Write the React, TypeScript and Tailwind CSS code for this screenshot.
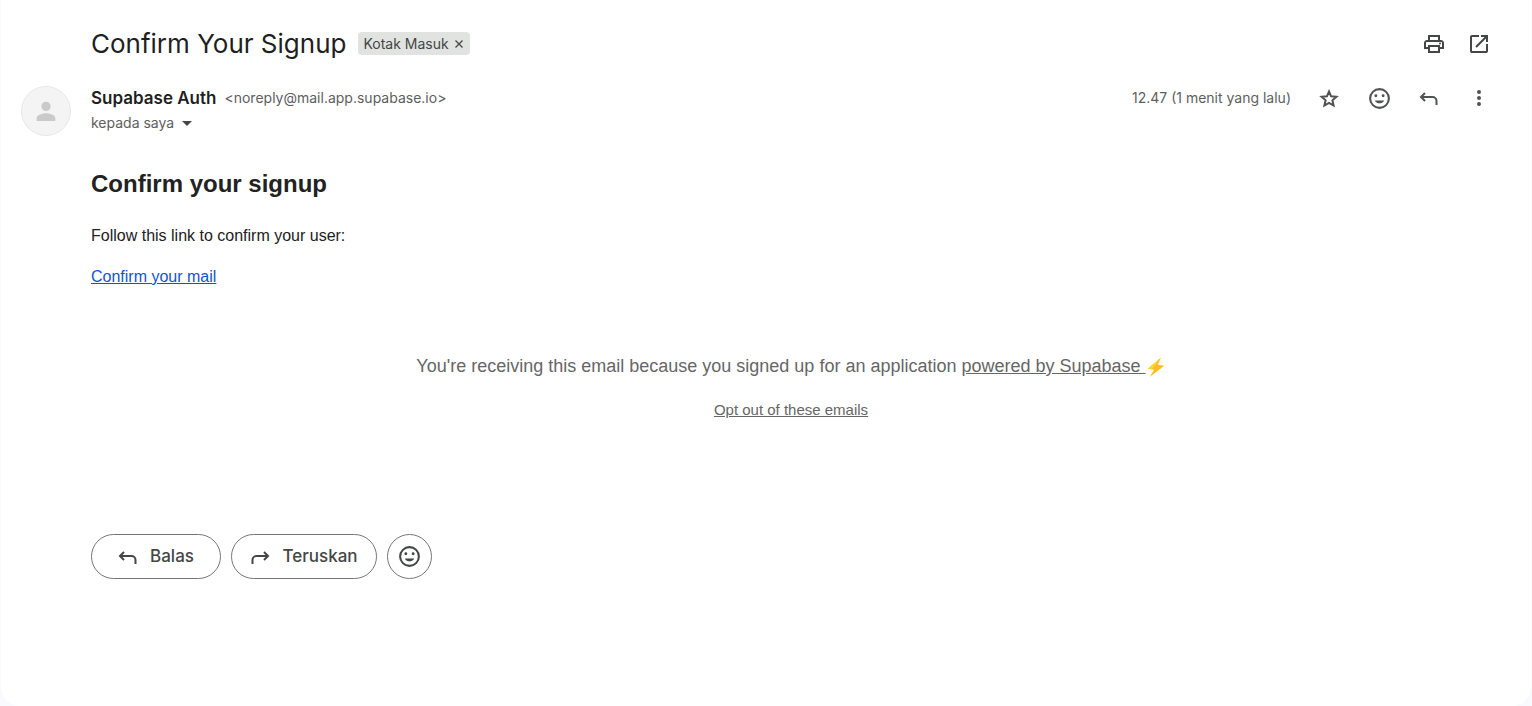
import type { ReactNode } from "react";

type IconProps = { className?: string; path: string };

function Icon({ className = "size-6", path }: IconProps) {
  return (
    <svg viewBox="0 0 24 24" className={className} fill="currentColor" aria-hidden="true">
      <path d={path} />
    </svg>
  );
}

const PRINT =
  "M19 8h-1V3H6v5H5c-1.66 0-3 1.34-3 3v6h4v4h12v-4h4v-6c0-1.66-1.34-3-3-3zM8 5h8v3H8V5zm8 14H8v-4h8v4zm2-4v-2H6v2H4v-4c0-.55.45-1 1-1h14c.55 0 1 .45 1 1v4h-2zM18 10.500a1 1 0 1 0 0 2 1 1 0 0 0 0-2z";
const OPEN =
  "M5 21c-.55 0-1.020-.2-1.410-.590A1.930 1.930 0 0 1 3 19V5c0-.55.2-1.020.590-1.410C3.980 3.200 4.450 3 5 3h7v2H5v14h14v-7h2v7c0 .55-.2 1.020-.590 1.410-.390.390-.860.590-1.410.590H5zm4.700-5.300-1.400-1.400L17.600 5H14V3h7v7h-2V6.400l-9.300 9.300z";
const STAR_OUTLINE = "M12 5.500l2.100 4.800 5.300.5-4 3.500 1.200 5.200L12 16.800l-4.600 2.700 1.200-5.200-4-3.500 5.300-.5z";
const SMILE =
  "M12 2a10 10 0 1 0 0 20 10 10 0 0 0 0-20zm0 18a8 8 0 1 1 0-16 8 8 0 0 1 0 16zM8.500 8a1.400 1.400 0 1 0 0 2.800 1.400 1.400 0 0 0 0-2.800zm7 0a1.400 1.400 0 1 0 0 2.800 1.400 1.400 0 0 0 0-2.800zM7.500 13.800c.7 1.700 2.400 2.800 4.500 2.800s3.800-1.100 4.500-2.800H7.500z";
const MORE =
  "M12 8a2 2 0 1 0 0-4 2 2 0 0 0 0 4zm0 2a2 2 0 1 0 0 4 2 2 0 0 0 0-4zm0 6a2 2 0 1 0 0 4 2 2 0 0 0 0-4z";
const PERSON =
  "M12 12a4 4 0 1 0 0-8 4 4 0 0 0 0 8zm0 2c-2.670 0-8 1.340-8 4v2.500h16V18c0-2.660-5.330-4-8-4z";

function Star() {
  return (
    <svg viewBox="0 0 24 24" className="size-6" fill="none" stroke="currentColor" strokeWidth="2" aria-hidden="true">
      <path d={STAR_OUTLINE} />
    </svg>
  );
}

function Arrow({ flip = false }: { flip?: boolean }) {
  return (
    <svg
      viewBox="0 0 20 20"
      className={flip ? "size-5 -scale-x-100" : "size-5"}
      fill="none"
      stroke="currentColor"
      strokeWidth="2"
      aria-hidden="true"
    >
      <path d="M6 5 2 9l4 4M2 9h11.500a4 4 0 0 1 4 4v4" />
    </svg>
  );
}

function IconButton({ label, children }: { label: string; children: ReactNode }) {
  return (
    <button type="button" aria-label={label} className="flex size-6 items-center justify-center">
      {children}
    </button>
  );
}

const pill =
  "flex h-[45px] items-center justify-center rounded-full border border-[#747775] text-[#444746]";

export default function App() {
  return (
    <div className="min-h-screen bg-[#f8fafd] px-px font-['Inter',sans-serif]">
      <main className="min-h-screen rounded-b-[20px] bg-white pr-10 pl-5 pb-8 text-[#202124]">
        <header className="flex items-center pt-6 pl-[70px]">
          <h1 className="text-[26px] leading-10 font-normal text-[#1f1f1f]">Confirm Your Signup</h1>
          <span className="mb-px ml-3 flex h-[23px] items-center gap-1 rounded bg-[#e1e3e1] px-[5px] text-sm text-[#444746]">
            Kotak Masuk
            <button type="button" aria-label="Hapus label Kotak Masuk" className="flex size-3 items-center justify-center">
              <svg viewBox="0 0 10 10" className="size-[10px]" fill="none" stroke="currentColor" strokeWidth="1.300" aria-hidden="true">
                <path d="M1.500 1.500l7 7M8.500 1.500l-7 7" />
              </svg>
            </button>
          </span>
          <div className="ml-auto flex gap-[21px] text-[#444746]">
            <IconButton label="Cetak semua"><Icon path={PRINT} /></IconButton>
            <IconButton label="Buka di jendela baru"><Icon path={OPEN} /></IconButton>
          </div>
        </header>

        <section className="mt-[22px] flex items-start">
          <div className="flex size-[50px] shrink-0 items-center justify-center rounded-full border border-[#e8e8e8] bg-[#f4f4f4] text-[#cacaca]">
            <Icon className="size-7" path={PERSON} />
          </div>
          <div className="ml-5 text-sm text-[#5e5e5e]">
            <div className="flex items-center gap-2 leading-6">
              <span className="text-[17px] font-semibold text-[#1f1f1f]">Supabase Auth</span>
              <span>&lt;noreply@mail.app.supabase.io&gt;</span>
            </div>
            <button type="button" className="mt-px flex items-center gap-2 leading-6">
              kepada saya
              <svg viewBox="0 0 10 5" className="h-[5px] w-[10px]" fill="#444746" aria-hidden="true">
                <path d="M0 0h10L5 5z" />
              </svg>
            </button>
          </div>
          <div className="ml-auto flex items-center text-[#5e5e5e]">
            <time className="mr-[26px] text-sm">12.47 (1 menit yang lalu)</time>
            <div className="flex gap-[26px] text-[#505352]">
              <IconButton label="Beri bintang"><Star /></IconButton>
              <IconButton label="Tambahkan reaksi"><Icon className="size-[25px] shrink-0" path={SMILE} /></IconButton>
              <IconButton label="Balas"><Arrow /></IconButton>
              <IconButton label="Lainnya"><Icon className="size-6" path={MORE} /></IconButton>
            </div>
          </div>
        </section>

        <article className="pl-[70px] font-['Liberation_Sans',Arial,sans-serif] text-[#222222]">
          <h2 className="mt-8 text-2xl font-bold">Confirm your signup</h2>
          <p className="mt-6 text-base">Follow this link to confirm your user:</p>
          <p className="mt-[17px] text-base">
            <a href="#confirm" className="text-[#1155cc] underline">Confirm your mail</a>
          </p>
          <footer className="mt-[63px] text-center text-[#666666]">
            <p className="text-lg">
              You're receiving this email because you signed up for an application{" "}
              <a href="#supabase" className="underline">powered by Supabase </a>
              <svg viewBox="0 0 20 20" className="inline size-5 align-[-5px]" aria-hidden="true">
                <path fill="#fdbf20" d="M15 .5 1.800 11.800l6.200.9L3.800 20 18.300 8.700l-6.500-1z" />
                <path fill="#ffd43b" d="M15 .5 1.800 11.800l4 .5z" />
              </svg>
            </p>
            <p className="mt-[18px] text-[15px] leading-6">
              <a href="#opt-out" className="underline">Opt out of these emails</a>
            </p>
          </footer>
        </article>

        <div className="mt-28 flex gap-[10px] pl-[70px] text-[17px] font-medium">
          <button type="button" className={`${pill} w-[130px] gap-3`}>
            <Arrow />
            Balas
          </button>
          <button type="button" className={`${pill} w-[146px] gap-3`}>
            <Arrow flip />
            Teruskan
          </button>
          <button type="button" aria-label="Tambahkan reaksi emoji" className={`${pill} w-[45px]`}>
            <Icon className="size-[25px]" path={SMILE} />
          </button>
        </div>
      </main>
    </div>
  );
}
